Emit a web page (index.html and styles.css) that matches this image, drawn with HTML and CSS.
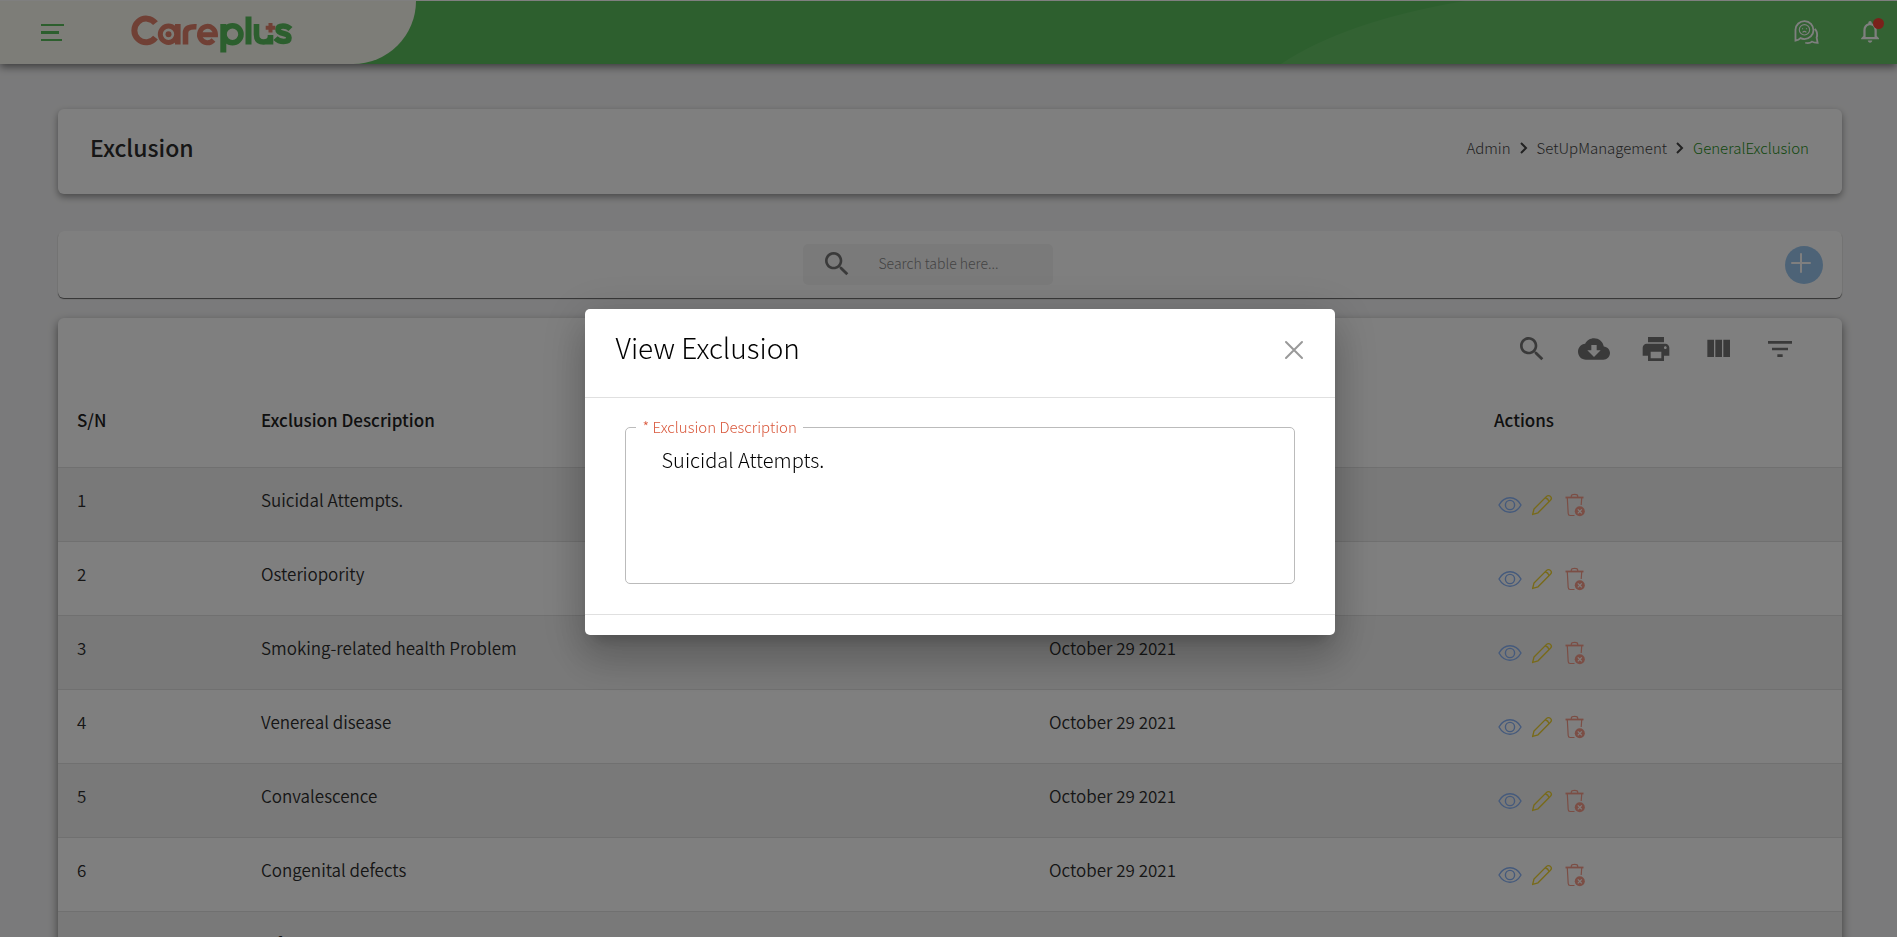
FILE: index.html
```html
<!DOCTYPE html>
<html lang="en">
<head>
<meta charset="utf-8">
<title>Careplus - Exclusion</title>
<link rel="stylesheet" href="styles.css">
</head>
<body>
<svg class="sprite" aria-hidden="true">
  <symbol id="search" viewBox="0 0 24 24"><path d="M15.500 14h-.79l-.28-.27C15.410 12.590 16 11.110 16 9.500 16 5.910 13.090 3 9.500 3S3 5.910 3 9.500 5.910 16 9.500 16c1.610 0 3.090-.59 4.230-1.570l.27.28v.79l5 4.990L20.490 19l-4.990-5zm-6 0C7.010 14 5 11.990 5 9.500S7.010 5 9.500 5 14 7.010 14 9.500 11.990 14 9.500 14z"/></symbol>
  <symbol id="eye" viewBox="0 0 24 24"><g fill="none" stroke="currentColor" stroke-width="1.400"><path d="M1 12C3.500 7.500 7.500 4.800 12 4.800s8.500 2.700 11 7.200C20.500 16.500 16.500 19.200 12 19.200S3.500 16.500 1 12z"/><circle cx="12" cy="12" r="4.600"/></g></symbol>
  <symbol id="pen" viewBox="0 0 24 24"><g fill="none" stroke="currentColor" stroke-width="1.500" stroke-linejoin="round"><path d="M1.800 22.300l1.500-6L17 2.600a2.800 2.800 0 0 1 4.200 4.200L7.700 20.500z"/><path d="M15.500 4.100q3.300.9 4.200 4.200"/></g></symbol>
  <symbol id="bin" viewBox="0 0 24 24"><g fill="none" stroke="currentColor"><path stroke-width="1.800" d="M1.500 4.500h18"/><path stroke-width="1.200" d="M7.300 4V3q0-1.700 3.200-1.700T13.700 3v1M3.300 5l.9 15.500q.1 2 2 2h4.300M17.700 5l-.5 7"/></g><circle cx="15.800" cy="18.300" r="5" fill="currentColor"/><path d="M13.800 16.300l4 4m0-4l-4 4" stroke="#fff" stroke-width="1.200"/></symbol>
</svg>

<header class="topbar">
  <div class="brand">
    <button class="plain menu" aria-label="Toggle menu"><span></span><span></span><span></span></button>
    <a class="logo" href="#" aria-label="Careplus">
      <svg width="162" height="40" viewBox="0 0 162 40" fill="none" stroke-width="6">
        <g stroke="#e1806b">
          <path d="M24.500 8.200A11.800 11.800 0 1 0 24.500 22.600"/>
          <circle cx="37.500" cy="19.300" r="8.200" stroke-width="5"/><path d="M46.800 9v20.500" stroke-width="5.600"/>
          <circle cx="37.500" cy="19.300" r="3" fill="#e1806b" stroke="none"/>
          <path d="M54.500 29.500V18q0-7 11-6.200" stroke-width="5.600"/>
          <path d="M71 19.800h13.500A8 8.200 0 1 0 82.500 25" stroke-width="5"/>
        </g>
        <g stroke="#59be5d">
          <circle cx="101.500" cy="19.300" r="8.500" stroke-width="5.600"/><path d="M92.300 9v28.500M117.500 1.500v28" stroke-width="6"/>
          <path d="M125.500 9v10.500q0 7.500 7 7.500t7-6M139.500 20v9.500" stroke-width="5.600"/>
          <path d="M159.500 14q-3-3-7.500-3-5 0-5 3.300 0 3.200 5.500 4.200t5.500 4.300q0 3.700-5.500 3.700-5 0-8-3.300" stroke-width="5.600"/>
        </g>
        <path d="M139.500 8v9.500M134.700 12.700h9.600" stroke="#e1806b" stroke-width="4"/>
      </svg>
    </a>
  </div>
  <svg class="curve" viewBox="0 0 630 63" preserveAspectRatio="none" aria-hidden="true"><path d="M10 63Q75 20 195 0H630V63z" fill="#66c567"/></svg>
  <nav class="alerts">
    <button class="plain" aria-label="Messages">
      <svg width="27" height="27" viewBox="0 0 24 24" fill="none" stroke="#fff"><path stroke-width="1.600" d="M2.200 20.200V10.400a8 8 0 1 1 8 8.300q-2 0-3.500-.8-1.700 1.800-4.500 2.300zM19.500 9.500q3 4 1.500 8l.9 4.500q-3.500 0-5-1-2.500 2-6 1"/><circle cx="10.200" cy="10.500" r="4.600"/><path d="M8 9.500h1m2.500 0h1M8.500 12.800q1.700-1.800 3.400 0"/></svg>
    </button>
    <button class="plain bell" aria-label="Notifications">
      <svg width="29" height="27" viewBox="0 0 26 24" fill="#fff"><path d="M13.500 22c1.100 0 2-.9 2-2h-4c0 1.100.9 2 2 2zm6-6v-5c0-3.070-1.630-5.640-4.500-6.320V4c0-.83-.67-1.500-1.500-1.500s-1.500.67-1.500 1.500v.68C9.140 5.360 7.500 7.920 7.500 11v5l-2 2v1h16v-1l-2-2zm-2 1h-8v-6c0-2.480 1.510-4.500 4-4.500s4 2.020 4 4.500v6z"/></svg>
      <span class="dot"></span>
    </button>
  </nav>
</header>

<main class="page">
  <section class="card heading">
    <h1>Exclusion</h1>
    <nav class="crumbs" aria-label="Breadcrumb">
      <a href="#">Admin</a>
      <svg width="8" height="12" viewBox="0 0 8 12"><path d="M1 1l5 5-5 5"/></svg>
      <a href="#">SetUpManagement</a>
      <svg width="8" height="12" viewBox="0 0 8 12"><path d="M1 1l5 5-5 5"/></svg>
      <a href="#" class="current">GeneralExclusion</a>
    </nav>
  </section>

  <section class="card filter">
    <label class="search"><svg width="32" height="32"><use href="#search"/></svg><input type="text" placeholder="Search table here..." aria-label="Search table"></label>
    <button class="plain add" aria-label="Add exclusion"><svg width="20" height="20" viewBox="0 0 20 20"><path d="M10 1v18M1 10h18"/></svg></button>
  </section>

  <section class="card listing">
    <div class="tools">
      <button class="plain" aria-label="Search"><svg width="32" height="32"><use href="#search"/></svg></button>
      <button class="plain" aria-label="Download"><svg width="32" height="32" viewBox="0 0 24 24"><path d="M19.350 10.040C18.670 6.590 15.640 4 12 4 9.110 4 6.600 5.640 5.350 8.040 2.340 8.360 0 10.910 0 14c0 3.310 2.690 6 6 6h13c2.760 0 5-2.240 5-5 0-2.640-2.050-4.780-4.650-4.960zM17 13l-5 5-5-5h3V9h4v4h3z"/></svg></button>
      <button class="plain" aria-label="Print"><svg width="32" height="32" viewBox="0 0 24 24"><path d="M19 8H5c-1.660 0-3 1.340-3 3v6h4v4h12v-4h4v-6c0-1.660-1.340-3-3-3zm-3 11H8v-5h8v5zm3-7c-.55 0-1-.45-1-1s.45-1 1-1 1 .45 1 1-.45 1-1 1zm-1-9H6v4h12V3z"/></svg></button>
      <button class="plain" aria-label="View columns"><svg width="32" height="32" viewBox="0 0 24 24"><path d="M10 18h5V5h-5v13zm-6 0h5V5H4v13zM16 5v13h5V5h-5z"/></svg></button>
      <button class="plain" aria-label="Filter"><svg width="32" height="32" viewBox="0 0 24 24"><path d="M10 18h4v-2h-4v2zM3 6v2h18V6H3zm3 7h12v-2H6v2z"/></svg></button>
    </div>
    <table>
      <colgroup><col class="c-num"><col class="c-desc"><col class="c-date"><col class="c-act"></colgroup>
      <thead><tr><th>S/N</th><th>Exclusion Description</th><th>Date Created</th><th>Actions</th></tr></thead>
      <tbody id="rows"></tbody>
    </table>
  </section>
</main>

<div class="backdrop">
  <div class="dialog" role="dialog" aria-modal="true" aria-labelledby="dialog-title">
    <div class="dialog-head">
      <h2 id="dialog-title">View Exclusion</h2>
      <button class="plain" aria-label="Close"><svg width="20" height="20" viewBox="0 0 20 20"><path d="M2 2l16 16M18 2L2 18"/></svg></button>
    </div>
    <div class="dialog-body">
      <fieldset>
        <legend><label for="description">* Exclusion Description</label></legend>
        <textarea id="description" readonly>Suicidal Attempts.</textarea>
      </fieldset>
    </div>
    <div class="dialog-foot"></div>
  </div>
</div>
<script src="rows.js"></script>
</body>
</html>
```
FILE: styles.css
```css
* { box-sizing: border-box; }
html, body { height: 100%; }
body {
  margin: 0;
  overflow: hidden;
  background: #f5f5f6;
  color: #2c2c2c;
  font-family: "Noto Sans CJK SC", sans-serif;
  font-size: 17px;
  font-weight: 350;
}
h1, h2 { margin: 0; }
a { color: inherit; text-decoration: none; }
.sprite { position: absolute; width: 0; height: 0; }
.plain { border: 0; padding: 0; background: none; color: inherit; font: inherit; display: inline-flex; }

.topbar {
  position: relative;
  display: flex;
  height: 64px;
  border-top: 1px solid #fff;
  background: #5bbe5d;
  box-shadow: 0 3px 8px rgba(0, 0, 0, .5);
}
.brand {
  display: flex;
  align-items: center;
  gap: 67px;
  width: 416px;
  padding-left: 41px;
  background: #fafaf0;
  border-bottom-right-radius: 63px;
}
.menu { flex-direction: column; gap: 5px; }
.menu span { width: 23px; height: 2px; background: #5bbe5d; }
.menu span:nth-child(2) { width: 18px; height: 3px; }
.menu span:nth-child(3) { width: 21px; }
.logo { display: flex; padding-top: 5px; }
.curve { width: 33%; height: 63px; margin-left: auto; }
.alerts {
  position: absolute;
  top: 0;
  right: 13px;
  height: 61px;
  display: flex;
  align-items: center;
  gap: 35px;
}
.bell { position: relative; }
.dot {
  position: absolute;
  top: 0;
  right: 0;
  width: 11px;
  height: 11px;
  border-radius: 50%;
  background: #f44336;
}

.page { padding: 45px 55px 0 58px; }
.card { background: #fff; border-radius: 6px; }
.heading {
  display: flex;
  align-items: center;
  justify-content: space-between;
  height: 85px;
  padding: 0 33px 8px 32px;
  box-shadow: 0 3px 7px rgba(0, 0, 0, .4);
}
h1 { padding-bottom: 2px; font-size: 23px; font-weight: 500; }
.crumbs { display: flex; align-items: center; gap: 9px; font-size: 15px; font-weight: 300; color: #444; }
.crumbs svg { fill: none; stroke: #444; stroke-width: 2; }
.crumbs .current { color: #1f8f22; }

.filter {
  display: grid;
  grid-template-columns: 1fr auto 1fr;
  align-items: center;
  height: 67px;
  margin-top: 37px;
  padding-right: 19px;
  box-shadow: 0 1px 1px rgba(0, 0, 0, .6);
}
.search {
  grid-column: 2;
  display: flex;
  align-items: center;
  gap: 26px;
  width: 250px;
  height: 41px;
  margin-right: 26px;
  padding: 0 0 2px 18px;
  border-radius: 5px;
  background: #f5f5f5;
}
.search svg { flex: none; fill: #757575; }
.search input { flex: 1; min-width: 0; border: 0; padding: 0 0 2px; background: none; font: inherit; font-size: 14px; font-weight: 300; outline: 0; }
.search input::placeholder { color: #888; }
.add {
  justify-self: end;
  width: 38px;
  height: 38px;
  padding: 7px 0 0 6px;
  border-radius: 50%;
  background: #9bc7ef;
}
.add svg { fill: none; stroke: #fff; stroke-width: 2; stroke-linecap: round; }

.listing {
  margin-top: 20px;
  padding-top: 15px;
  box-shadow: 0 4px 10px rgba(0, 0, 0, .5);
}
.tools { display: flex; justify-content: flex-end; gap: 30px; padding-right: 46px; fill: #757575; }
table { width: 100%; border-collapse: collapse; table-layout: fixed; }
.c-num { width: 184px; }
.c-desc { width: 788px; }
.c-date { width: 445px; }
th, td { padding: 0 19px; border-bottom: 1px solid #e0e0e0; text-align: left; white-space: nowrap; }
th { height: 102px; padding-top: 7px; color: #212121; font-weight: 500; }
td { height: 74px; padding-bottom: 9px; }
tbody tr:nth-child(odd) { background: #f2f2f2; }
.row-actions { display: flex; align-items: center; gap: 9px; padding: 11px 0 0 4px; }
.view { color: #8ab4f8; }
.edit { color: #f0d432; }
.delete { color: #f79c8a; padding-left: 2px; }

.backdrop {
  position: fixed;
  inset: 0;
  display: flex;
  align-items: center;
  justify-content: center;
  padding: 6px 0 0 22px;
  background: rgba(0, 0, 0, .5);
}
.dialog {
  width: 750px;
  background: #fff;
  border-radius: 5px;
  font-weight: 300;
  box-shadow: 0 11px 15px -7px rgba(0, 0, 0, .2), 0 24px 38px 3px rgba(0, 0, 0, .14), 0 9px 46px 8px rgba(0, 0, 0, .12);
}
.dialog-head {
  display: flex;
  align-items: center;
  justify-content: space-between;
  height: 89px;
  padding: 0 31px 6px 31px;
  border-bottom: 1px solid #e0e0e0;
}
h2 { padding-bottom: 5px; color: #000; font-size: 28px; font-weight: 300; }
.dialog-head svg { fill: none; stroke: #999; stroke-width: 2; stroke-linecap: round; }
.dialog-body { padding: 20px 40px 30px; }
fieldset { margin: 0; padding: 0 10px; border: 1px solid #bbb; border-radius: 5px; }
legend { padding: 0 6px 2px 7px; color: #d9583c; font-size: 15px; line-height: 18px; }
textarea {
  display: block;
  width: 100%;
  height: 145px;
  padding: 8px 26px;
  border: 0;
  outline: 0;
  resize: none;
  background: none;
  color: #000;
  font: inherit;
  font-size: 20px;
  line-height: 28px;
}
.dialog-foot { height: 21px; border-top: 1px solid #e0e0e0; }
```
FILE: rows.js
```js
const items = [
  "Suicidal Attempts.",
  "Osteriopority",
  "Smoking-related health Problem",
  "Venereal disease",
  "Convalescence",
  "Congenital defects",
  "Infertility and"
];
const action = (kind, icon, label, size) =>
  `<button class="plain ${kind}" aria-label="${label}"><svg width="${size}" height="${size}"><use href="#${icon}"/></svg></button>`;
document.getElementById("rows").innerHTML = items.map((name, i) => `
  <tr>
    <td>${i + 1}</td>
    <td>${name}</td>
    <td>October 29 2021</td>
    <td><div class="row-actions">${action("view", "eye", "View", 24)}${action("edit", "pen", "Edit", 22)}${action("delete", "bin", "Delete", 24)}</div></td>
  </tr>`).join("");
```
